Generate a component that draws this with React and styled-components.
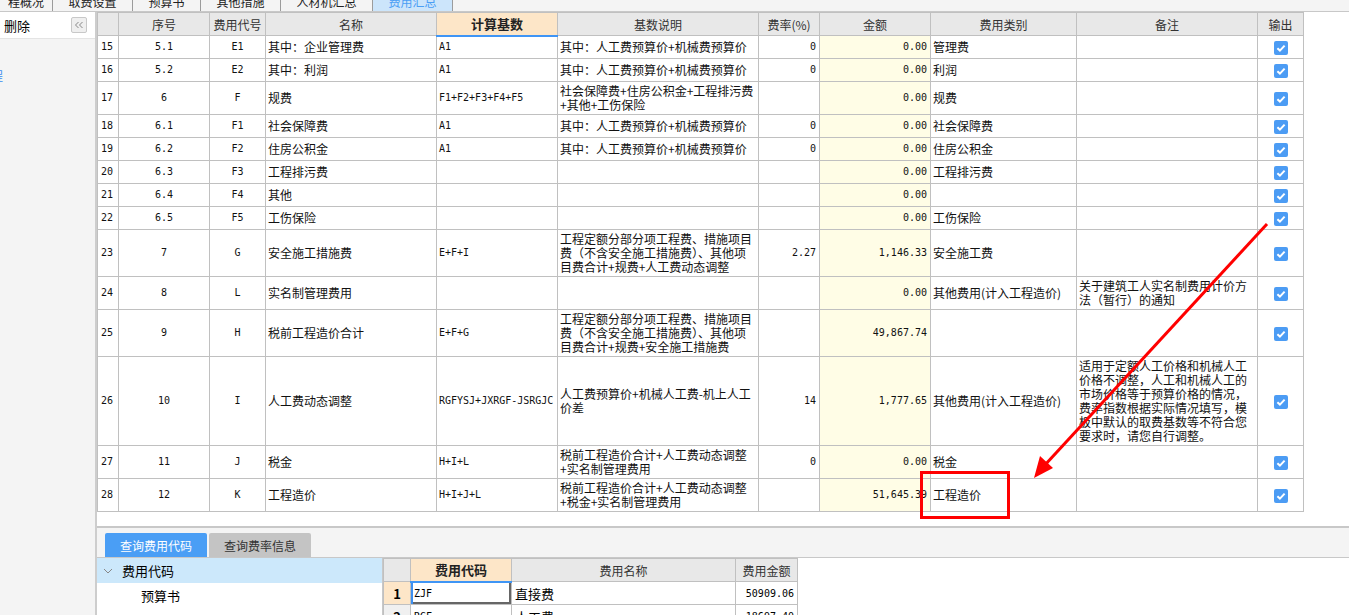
import React from "react";
import styled, { createGlobalStyle } from "styled-components";

const GlobalStyle = createGlobalStyle`
  html, body {
    margin: 0;
    padding: 0;
    overflow: hidden;
  }
  body {
    font-family: "Noto Sans CJK SC", "Noto Sans", sans-serif;
    color: #000;
  }
`;

const CJK = `"Noto Sans CJK SC", "Noto Sans", sans-serif`;
const MONO = `"DejaVu Sans Mono", "Liberation Mono", "Noto Sans CJK SC", monospace`;

const Page = styled.div({
  position: "relative",
  width: "1349px",
  height: "615px",
  display: "flex",
  flexDirection: "column",
  overflow: "hidden",
  background: "#fff",
});

const TopTabs = styled.div({
  display: "flex",
  height: "12px",
  flexShrink: 0,
  boxSizing: "border-box",
  background: "#f4f4f4",
  borderBottom: "1px solid #c8c8c8",
  overflow: "hidden",
});

const TopTab = styled.div`
  width: ${(p) => p.$w}px;
  box-sizing: border-box;
  display: flex;
  align-items: flex-end;
  justify-content: center;
  padding-bottom: 3px;
  border-right: 1px solid #9c9c9c;
  background: ${(p) => (p.$active ? "#cce5fb" : "#f4f4f4")};
  color: ${(p) => (p.$active ? "#4a9ef5" : "#222")};
  font-size: 12px;
  line-height: 12px;
  white-space: nowrap;
  overflow: hidden;
`;

const Body = styled.div({
  display: "flex",
  flex: 1,
  minHeight: 0,
});

const Side = styled.div({
  width: "95px",
  borderRight: "2px solid #cdcdcd",
  background: "#f4f4f4",
  display: "flex",
  flexDirection: "column",
  overflow: "hidden",
});

const SideHead = styled.div({
  height: "26px",
  background: "#fff",
  borderBottom: "1px solid #e4e4e4",
  display: "flex",
  alignItems: "center",
  justifyContent: "space-between",
  padding: "0 8px 0 4px",
  fontSize: "13px",
});

const CollapseBtn = styled.div({
  width: "14px",
  height: "14px",
  border: "1px solid #c8c8c8",
  borderRadius: "2px",
  background: "#efefef",
  display: "flex",
  alignItems: "center",
  justifyContent: "center",
});

const SideLink = styled.div({
  marginTop: "30px",
  marginLeft: "-9px",
  color: "#3c8df0",
  fontSize: "12px",
  lineHeight: "14px",
});

const Main = styled.div({
  flex: 1,
  display: "flex",
  flexDirection: "column",
  minWidth: 0,
  background: "#fff",
});

const GridArea = styled.div({
  height: "514px",
  flexShrink: 0,
  overflow: "hidden",
  background: "#fff",
});

const Table = styled.table`
  border-collapse: collapse;
  table-layout: fixed;
  width: ${(p) => p.$w}px;
`;

const Row = styled.tr`
  height: ${(p) => p.$h}px;
`;

const Head = styled.th`
  box-sizing: border-box;
  border: 1px solid #c0c0c0;
  border-bottom: ${(p) => (p.$hl ? "2px solid #3f95f5" : "1px solid #c0c0c0")};
  background: ${(p) => (p.$hl ? "#fde6c8" : "#e8e8e8")};
  font-family: ${CJK};
  font-size: ${(p) => (p.$hl ? "13px" : "12px")};
  font-weight: ${(p) => (p.$hl ? 700 : 400)};
  color: ${(p) => (p.$hl ? "#222" : "#333")};
  padding: 0;
  text-align: center;
  vertical-align: middle;
`;

const Cell = styled.td`
  border: 1px solid #c0c0c0;
  padding: 0 ${(p) => (p.$align === "right" ? "3px" : "2px")} 0 ${(p) =>
      p.$pl ?? 2}px;
  background: ${(p) => p.$bg || "#fff"};
  text-align: ${(p) => p.$align || "left"};
  vertical-align: middle;
  font-family: ${(p) => (p.$mono ? MONO : CJK)};
  font-size: ${(p) => (p.$mono ? "10px" : "12px")};
  line-height: 14px;
  color: #111;
  white-space: nowrap;
  overflow: hidden;
`;

const Lines = styled.div({
  display: "flex",
  flexDirection: "column",
});

const CheckBox = styled.span({
  display: "inline-flex",
  verticalAlign: "middle",
});

const BottomTabs = styled.div({
  height: "32px",
  flexShrink: 0,
  boxSizing: "border-box",
  borderTop: "2px solid #c8c8c8",
  borderBottom: "1px solid #c8c8c8",
  background: "#f4f4f4",
  display: "flex",
  alignItems: "flex-end",
  gap: "2px",
  paddingLeft: "8px",
});

const BottomTab = styled.div`
  width: 102px;
  height: 24px;
  display: flex;
  align-items: center;
  justify-content: center;
  background: ${(p) => (p.$active ? "#4a9ef5" : "#c4c4c4")};
  color: ${(p) => (p.$active ? "#fff" : "#333")};
  font-size: 12px;
  border-radius: 2px 2px 0 0;
`;

const BottomBody = styled.div({
  flex: 1,
  display: "flex",
  minHeight: 0,
  background: "#fff",
});

const Tree = styled.div({
  width: "285px",
  borderRight: "1px solid #c8c8c8",
  display: "flex",
  flexDirection: "column",
});

const TreeHead = styled.div({
  height: "25px",
  background: "#cce8fb",
  display: "flex",
  alignItems: "center",
  paddingLeft: "6px",
  gap: "9px",
  fontSize: "13px",
});

const TreeItem = styled.div({
  height: "25px",
  lineHeight: "25px",
  paddingLeft: "44px",
  fontSize: "13px",
});

const CodeCell = styled.td`
  border: 1px solid #c0c0c0;
  padding: 0 3px;
  background: ${(p) => p.$bg || "#fff"};
  text-align: ${(p) => p.$align || "left"};
  font-family: ${(p) => (p.$mono ? MONO : CJK)};
  font-size: ${(p) => (p.$mono ? "10px" : "13px")};
  font-weight: ${(p) => (p.$bold ? 700 : 400)};
  box-shadow: ${(p) =>
    p.$edit ? "inset 2px 0 #3d8ff0, inset -2px -2px #666" : "none"};
  vertical-align: middle;
  white-space: nowrap;
  overflow: hidden;
`;

const Overlay = styled.svg({
  position: "absolute",
  left: 0,
  top: 0,
  pointerEvents: "none",
});

const cols = [21, 91, 56, 171, 121, 201, 61, 111, 146, 181, 46];
const heads = ["", "序号", "费用代号", "名称", "计算基数", "基数说明", "费率(%)", "金额", "费用类别", "备注", "输出"];

const A1 = ["其中：人工费预算价+机械费预算价"];
const rows = [
  [15, "5.1", "E1", "其中：企业管理费", "A1", A1, "0", "0.00", "管理费", [], 23],
  [16, "5.2", "E2", "其中：利润", "A1", A1, "0", "0.00", "利润", [], 23],
  [17, "6", "F", "规费", "F1+F2+F3+F4+F5", ["社会保障费+住房公积金+工程排污费", "+其他+工伤保险"], "", "0.00", "规费", [], 33],
  [18, "6.1", "F1", "社会保障费", "A1", A1, "0", "0.00", "社会保障费", [], 23],
  [19, "6.2", "F2", "住房公积金", "A1", A1, "0", "0.00", "住房公积金", [], 23],
  [20, "6.3", "F3", "工程排污费", "", [], "", "0.00", "工程排污费", [], 23],
  [21, "6.4", "F4", "其他", "", [], "", "0.00", "", [], 23],
  [22, "6.5", "F5", "工伤保险", "", [], "", "0.00", "工伤保险", [], 23],
  [23, "7", "G", "安全施工措施费", "E+F+I", ["工程定额分部分项工程费、措施项目", "费（不含安全施工措施费）、其他项", "目费合计+规费+人工费动态调整"], "2.27", "1,146.33", "安全施工费", [], 47],
  [24, "8", "L", "实名制管理费用", "", [], "", "0.00", "其他费用(计入工程造价)", ["关于建筑工人实名制费用计价方", "法（暂行）的通知"], 33],
  [25, "9", "H", "税前工程造价合计", "E+F+G", ["工程定额分部分项工程费、措施项目", "费（不含安全施工措施费）、其他项", "目费合计+规费+安全施工措施费"], "", "49,867.74", "", [], 47],
  [26, "10", "I", "人工费动态调整", "RGFYSJ+JXRGF-JSRGJC", ["人工费预算价+机械人工费-机上人工", "价差"], "14", "1,777.65", "其他费用(计入工程造价)", ["适用于定额人工价格和机械人工", "价格不调整，人工和机械人工的", "市场价格等于预算价格的情况，", "费率指数根据实际情况填写，模", "板中默认的取费基数等不符合您", "要求时，请您自行调整。"], 89],
  [27, "11", "J", "税金", "H+I+L", ["税前工程造价合计+人工费动态调整", "+实名制管理费用"], "0", "0.00", "税金", [], 33],
  [28, "12", "K", "工程造价", "H+I+J+L", ["税前工程造价合计+人工费动态调整", "+税金+实名制管理费用"], "", "51,645.39", "工程造价", [], 33],
];

const Check = () => (
  <CheckBox>
    <svg width="14" height="14" viewBox="0 0 14 14">
      <rect width="14" height="14" rx="2" fill="#4c9cf4" />
      <path d="M3.4 7.3 L5.9 9.6 L10.6 4.6" fill="none" stroke="#fff" strokeWidth="2" />
    </svg>
  </CheckBox>
);

const TextLines = ({ lines }) =>
  lines.length ? (
    <Lines>
      {lines.map((l) => (
        <span key={l}>{l}</span>
      ))}
    </Lines>
  ) : null;

const topTabs = [
  ["程概况", 53],
  ["取费设置", 80],
  ["预算书", 68],
  ["其他措施", 80],
  ["人材机汇总", 92],
  ["费用汇总", 80, true],
];

const App = () => (
  <Page>
    <GlobalStyle />
    <TopTabs>
      {topTabs.map(([t, w, a]) => (
        <TopTab key={t} $w={w} $active={a}>
          {t}
        </TopTab>
      ))}
    </TopTabs>
    <Body>
      <Side>
        <SideHead>
          <span>删除</span>
          <CollapseBtn>
            <svg width="10" height="8" viewBox="0 0 10 8">
              <path d="M4.5 1 L1.5 4 L4.5 7 M8.5 1 L5.5 4 L8.5 7" fill="none" stroke="#888" strokeWidth="1" />
            </svg>
          </CollapseBtn>
        </SideHead>
        <SideLink>程</SideLink>
      </Side>
      <Main>
        <GridArea>
          <Table $w={1206}>
            <colgroup>
              {cols.map((w, i) => (
                <col key={i} style={{ width: w }} />
              ))}
            </colgroup>
            <thead>
              <Row $h={23}>
                {heads.map((h, i) => (
                  <Head key={i} $hl={i === 4}>
                    {h}
                  </Head>
                ))}
              </Row>
            </thead>
            <tbody>
              {rows.map((r) => (
                <Row key={r[0]} $h={r[10]}>
                  <Cell $mono $pl={3}>{r[0]}</Cell>
                  <Cell $mono $align="center">{r[1]}</Cell>
                  <Cell $mono $align="center">{r[2]}</Cell>
                  <Cell>{r[3]}</Cell>
                  <Cell $mono>{r[4]}</Cell>
                  <Cell>
                    <TextLines lines={r[5]} />
                  </Cell>
                  <Cell $mono $align="right">{r[6]}</Cell>
                  <Cell $mono $align="right" $bg="#fffde6">{r[7]}</Cell>
                  <Cell>{r[8]}</Cell>
                  <Cell>
                    <TextLines lines={r[9]} />
                  </Cell>
                  <Cell $align="center">
                    <Check />
                  </Cell>
                </Row>
              ))}
            </tbody>
          </Table>
        </GridArea>
        <BottomTabs>
          <BottomTab $active>查询费用代码</BottomTab>
          <BottomTab>查询费率信息</BottomTab>
        </BottomTabs>
        <BottomBody>
          <Tree>
            <TreeHead>
              <svg width="10" height="6" viewBox="0 0 10 6">
                <path d="M1 1 L5 5 L9 1" fill="none" stroke="#888" strokeWidth="1" />
              </svg>
              <span>费用代码</span>
            </TreeHead>
            <TreeItem>预算书</TreeItem>
          </Tree>
          <Table $w={414}>
            <colgroup>
              {[27, 101, 224, 62].map((w, i) => (
                <col key={i} style={{ width: w }} />
              ))}
            </colgroup>
            <thead>
              <Row $h={23}>
                <Head />
                <Head $hl>费用代码</Head>
                <Head>费用名称</Head>
                <Head>费用金额</Head>
              </Row>
            </thead>
            <tbody>
              <Row $h={23}>
                <CodeCell $bg="#fde6c8" $bold $align="center">1</CodeCell>
                <CodeCell $mono $edit>ZJF</CodeCell>
                <CodeCell>直接费</CodeCell>
                <CodeCell $mono $align="right">50909.06</CodeCell>
              </Row>
              <Row $h={23}>
                <CodeCell $bg="#f0f0f0" $bold $align="center">2</CodeCell>
                <CodeCell $mono>RGF</CodeCell>
                <CodeCell>人工费</CodeCell>
                <CodeCell $mono $align="right">18697.40</CodeCell>
              </Row>
            </tbody>
          </Table>
        </BottomBody>
      </Main>
    </Body>
    <Overlay width="1349" height="615" viewBox="0 0 1349 615">
      <line x1="1267" y1="224" x2="1044" y2="466" stroke="#f00" strokeWidth="3" />
      <polygon points="1034,478 1040,456 1053,468" fill="#f00" />
      <rect x="921.5" y="472.5" width="87" height="45" fill="none" stroke="#f00" strokeWidth="3" />
    </Overlay>
  </Page>
);

export default App;
